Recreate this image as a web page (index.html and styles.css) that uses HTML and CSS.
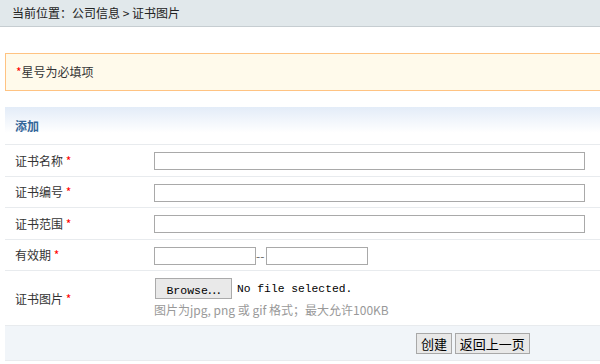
FILE: index.html
```html
<!DOCTYPE html>
<html>
  <head>
    <meta charset="utf-8" />
    <link rel="stylesheet" href="styles.css">
  </head>
  <body>
    <div class="location">当前位置：公司信息 &gt; 证书图片</div>

    <div class="notice"><span class="req">*</span>星号为必填项</div>

    <table class="form-table">
      <tr class="title-row">
        <th colspan="2">添加</th>
      </tr>
      <tr>
        <td class="label">证书名称 <span class="req">*</span></td>
        <td><input type="text" class="text-long" /></td>
      </tr>
      <tr>
        <td class="label">证书编号 <span class="req">*</span></td>
        <td><input type="text" class="text-long" /></td>
      </tr>
      <tr>
        <td class="label">证书范围 <span class="req">*</span></td>
        <td><input type="text" class="text-long" /></td>
      </tr>
      <tr>
        <td class="label">有效期 <span class="req">*</span></td>
        <td>
          <input type="text" class="text-date" /><span class="dash">--</span><input type="text" class="text-date" />
        </td>
      </tr>
      <tr class="file-row">
        <td class="label">证书图片 <span class="req">*</span></td>
        <td>
          <div class="file-box">
            <button type="button" class="browse">Browse<span class="dots">⋯</span></button>
            <span class="file-name">No file selected.</span>
          </div>
          <div class="hint">图片为jpg, png 或 gif 格式；最大允许100KB</div>
        </td>
      </tr>
      <tr class="action-row">
        <td colspan="2">
          <button type="button" class="btn">创建</button>
          <button type="button" class="btn">返回上一页</button>
        </td>
      </tr>
    </table>
  </body>
</html>
```

FILE: styles.css
```css
body {
  margin: 0;
  font-family: "Noto Sans CJK SC", "Noto Sans", sans-serif;
  font-size: 12px;
  color: #333;
  background: #fff;
}

.location {
  height: 26px;
  line-height: 26px;
  padding-left: 12px;
  background: #e1e8eb;
  border-bottom: 1px solid #c6cdd1;
  color: #222;
}

.notice {
  margin: 26px 0 0 5px;
  height: 36px;
  line-height: 36px;
  padding-left: 10px;
  background: #fffaeb;
  border: 1px solid #ffc382;
  border-right: none;
}

.req {
  color: #f00;
}

.form-table {
  margin: 16px 0 0 5px;
  width: 595px;
  border-collapse: collapse;
}

.form-table td,
.form-table th {
  padding: 0;
  border-bottom: 1px solid #e8ebee;
}

.title-row th {
  height: 37px;
  text-align: left;
  padding-left: 10px;
  color: #336699;
  font-weight: bold;
  background: linear-gradient(#e3ecf8, #fff 70%);
}

.form-table td {
  height: 30.5px;
}

.form-table td.label {
  width: 139px;
  padding-left: 10px;
}

.text-long,
.text-date {
  box-sizing: border-box;
  height: 18px;
  margin: 0;
  border: 1px solid #a9a9a9;
  vertical-align: middle;
}

.text-long {
  width: 431px;
}

.text-date {
  width: 102px;
}

.dash {
  display: inline-block;
  width: 10px;
  vertical-align: middle;
  color: #666;
}

.file-row td {
  height: 54px;
}

.file-box {
  display: flex;
  align-items: center;
  gap: 5px;
  margin-left: 1px;
}

.browse {
  width: 77px;
  height: 21px;
  padding: 0;
  border: 1px solid #aaa;
  background: #e9e9e9;
  font-family: "Liberation Mono", monospace;
  font-size: 11.5px;
  color: #000;
}

.browse .dots {
  font-family: "Noto Sans CJK SC", sans-serif;
  font-size: 12px;
}

.file-name {
  font-family: "Liberation Mono", monospace;
  font-size: 11.3px;
  color: #000;
}

.hint {
  margin-top: 2px;
  color: #999;
}

.action-row td {
  height: 34px;
  background: #f1f5f9;
  padding-left: 411px;
}

.btn {
  height: 21px;
  padding: 0 4px;
  margin: 0;
  border: 1px solid #a8a8a8;
  background: #e8e8e8;
  font-family: "Noto Sans CJK SC", sans-serif;
  font-size: 13px;
  color: #000;
  line-height: 19px;
}
```
